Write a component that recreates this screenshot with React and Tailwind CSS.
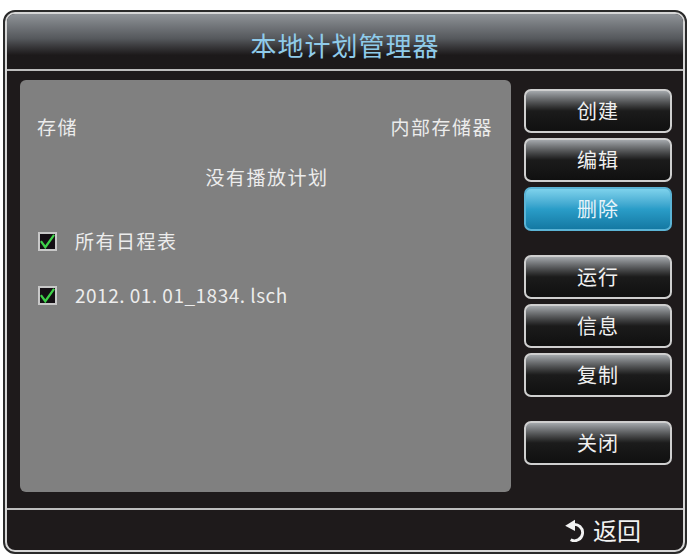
const font = { fontFamily: '"Noto Sans CJK SC", "Noto Sans", sans-serif' };

const Check = () => (
  <span className="w-[19px] h-[19px] border-2 border-[#c8c8c8] bg-[#140f14] flex items-center justify-center">
    <svg width="17" height="17" viewBox="0 0 17 17">
      <path d="M1 8 L6 15 L16 1" fill="none" stroke="#3fd24a" strokeWidth="2.6" />
    </svg>
  </span>
);

const Button = ({ label, active }) => (
  <div
    className={`h-[44px] rounded-[7px] border-2 flex items-center justify-center text-[20px] tracking-[1px] ${
      active
        ? "border-[#5bb4d6] bg-linear-to-b from-[#7dd2ec] via-[#2a9dc8] to-[#1479a3] text-[#e8f4fa]"
        : "border-[#cfcfcf] bg-linear-to-b from-[#a4a8ac] from-0% via-[#1b1b1b] via-50% to-[#101010] to-100% text-[#f0f0f0]"
    }`}
  >
    {label}
  </div>
);

export default function App() {
  return (
    <div className="w-[689px] h-[557px] bg-white pt-[10px] pl-[3px]" style={font}>
      <div className="w-[684px] h-[544px] border-2 border-[#2a2a2a] rounded-[12px] bg-[#2a2a2a]">
        <div className="h-full border-2 border-[#d6d6d6] rounded-[10px] overflow-hidden flex flex-col bg-[#1e1a1b]">
          {/* title */}
          <div className="h-[55px] shrink-0 flex items-center justify-center bg-linear-to-b from-[#8f9398] from-0% via-[#55585c] via-45% to-[#1c191a] to-75%">
            <span className="text-[26px] text-[#8fcbea] leading-none mt-[7px] tracking-[1px]">本地计划管理器</span>
          </div>
          <div className="h-[2px] shrink-0 bg-[#bdbdbd]" />

          {/* body */}
          <div className="h-[437px] shrink-0 flex pl-[13px] pr-[11px] pt-[9px] pb-[16px] gap-[13px]">
            <div className="w-[491px] h-full bg-[#808080] rounded-[6px] text-[#ececec] text-[19px] tracking-[1.5px] pt-[33px]">
              <div className="flex justify-between pl-[17px] pr-[18px] leading-[28px]">
                <span>存储</span>
                <span>内部存储器</span>
              </div>
              <div className="text-center mt-[22px] leading-[28px] pl-[3px]">没有播放计划</div>
              <div className="pl-[18px] mt-[36px] flex flex-col gap-[26px]">
                <div className="flex items-center gap-[18px] leading-[28px]">
                  <Check />
                  <span>所有日程表</span>
                </div>
                <div className="flex items-center gap-[18px] leading-[28px]">
                  <Check />
                  <span className="tracking-[0.5px]">2012. 01. 01_1834. lsch</span>
                </div>
              </div>
            </div>
            <div className="w-[148px] pt-[9px] flex flex-col">
              <div className="flex flex-col gap-[5px]">
                <Button label="创建" />
                <Button label="编辑" />
                <Button label="删除" active />
              </div>
              <div className="flex flex-col gap-[5px] mt-[24px]">
                <Button label="运行" />
                <Button label="信息" />
                <Button label="复制" />
              </div>
              <div className="mt-[24px]">
                <Button label="关闭" />
              </div>
            </div>
          </div>

          <div className="h-[2px] shrink-0 bg-[#bdbdbd]" />
          {/* footer */}
          <div className="flex-1 flex items-center justify-end pr-[42px] gap-[6px] text-[#f2f2f2]">
            <svg width="24" height="24" viewBox="0 0 22 22">
              <path d="M9 6 A7.5 7.5 0 1 1 7 20" fill="none" stroke="#f2f2f2" strokeWidth="2.6" />
              <polygon points="2,7 11,1.5 11,12" fill="#f2f2f2" />
            </svg>
            <span className="text-[24px] leading-none">返回</span>
          </div>
        </div>
      </div>
    </div>
  );
}
